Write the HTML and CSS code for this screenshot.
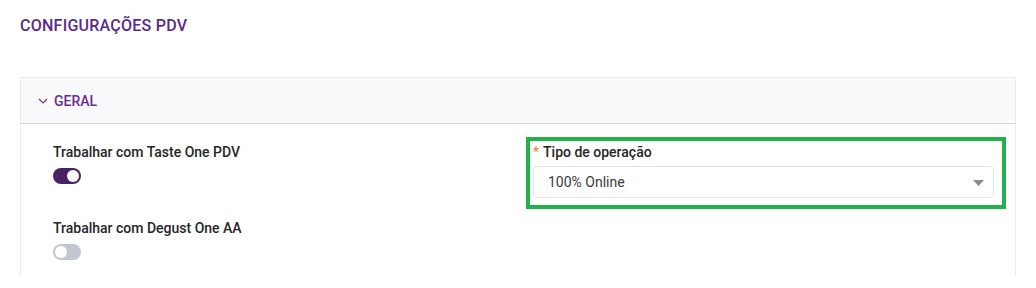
FILE: index.html
```html
<!DOCTYPE html>
<html lang="pt-BR">
<head>
  <meta charset="UTF-8">
  <meta name="viewport" content="width=device-width, initial-scale=1.0">
  <title>Configurações PDV</title>
  <link rel="stylesheet" href="styles.css">
</head>
<body>

  <h1 class="page-title">CONFIGURAÇÕES PDV</h1>

  <div class="panel">
    <div class="panel-header">
      <svg class="chevron" width="10" height="6" viewBox="0 0 10 6">
        <path d="M1 1 L5 5 L9 1" fill="none" stroke="currentColor" stroke-width="1.1"/>
      </svg>
      <span>GERAL</span>
    </div>

    <div class="panel-body">
      <div class="col-left">
        <div class="field">
          <label class="field-label">Trabalhar com Taste One PDV</label>
          <span class="switch on"><span class="knob"></span></span>
        </div>
        <div class="field">
          <label class="field-label">Trabalhar com Degust One AA</label>
          <span class="switch"><span class="knob"></span></span>
        </div>
      </div>

      <div class="col-right">
        <div class="highlight">
          <label class="field-label"><span class="required">*</span>Tipo de operação</label>
          <div class="select">
            <span>100% Online</span>
            <svg class="caret" width="11" height="6" viewBox="0 0 11 6">
              <path d="M0 0 H11 L5.5 6 Z" fill="#8c8c8c"/>
            </svg>
          </div>
        </div>
      </div>
    </div>
  </div>

</body>
</html>
```

FILE: styles.css
```css
body {
  margin: 0;
  padding: 14px 20px 0 20px;
  font-family: 'Roboto', 'Liberation Sans', sans-serif;
  background: #fff;
  color: #262626;
}

.page-title {
  margin: 0 0 39px 0;
  font-size: 16px;
  line-height: 24px;
  font-weight: 500;
  letter-spacing: 0.25px;
  color: #5b2a86;
}

/* Panel */
.panel {
  border: 1px solid #e9e9ef;
  border-bottom: none;
  width: 994px;
}

.panel-header {
  display: flex;
  align-items: center;
  height: 45px;
  padding-left: 17px;
  background-color: #fafafc;
  border-bottom: 1px solid #d4d4da;
  color: #6a2d94;
  font-size: 14px;
  font-weight: 500;
}

.chevron {
  margin-right: 6px;
  margin-top: 1px;
}

.panel-body {
  display: grid;
  grid-template-columns: 460px 461px;
  column-gap: 20px;
  padding: 17px 21px 16px 32px;
}

.col-left {
  display: flex;
  flex-direction: column;
  gap: 33px;
}

.field {
  display: flex;
  flex-direction: column;
  align-items: flex-start;
}

.field-label {
  font-size: 14px;
  line-height: 22px;
  font-weight: 500;
  color: #262626;
}

/* Switch */
.switch {
  display: block;
  position: relative;
  width: 28px;
  height: 16px;
  margin-top: 5px;
  border-radius: 8px;
  background-color: #c3c7d1;
}

.switch.on {
  background-color: #4b2065;
}

.knob {
  position: absolute;
  top: 2px;
  left: 2px;
  width: 12px;
  height: 12px;
  border-radius: 50%;
  background-color: #fff;
}

.switch.on .knob {
  left: 14px;
}

/* Select */
.highlight {
  margin: -4px -12px 0 -7px;
  padding: 0 8px 7px 3px;
  border: 4px solid #22b14c;
}

.required {
  color: #f07f2c;
  margin-right: 4px;
  font-weight: 400;
}

.select {
  display: flex;
  align-items: center;
  justify-content: space-between;
  height: 30px;
  margin-top: 3px;
  padding: 0 9px 0 14px;
  border: 1px solid #e4e4e8;
  border-radius: 4px;
  font-size: 14px;
  color: #3a3a3a;
}

.caret {
  margin-top: 1px;
}
```
